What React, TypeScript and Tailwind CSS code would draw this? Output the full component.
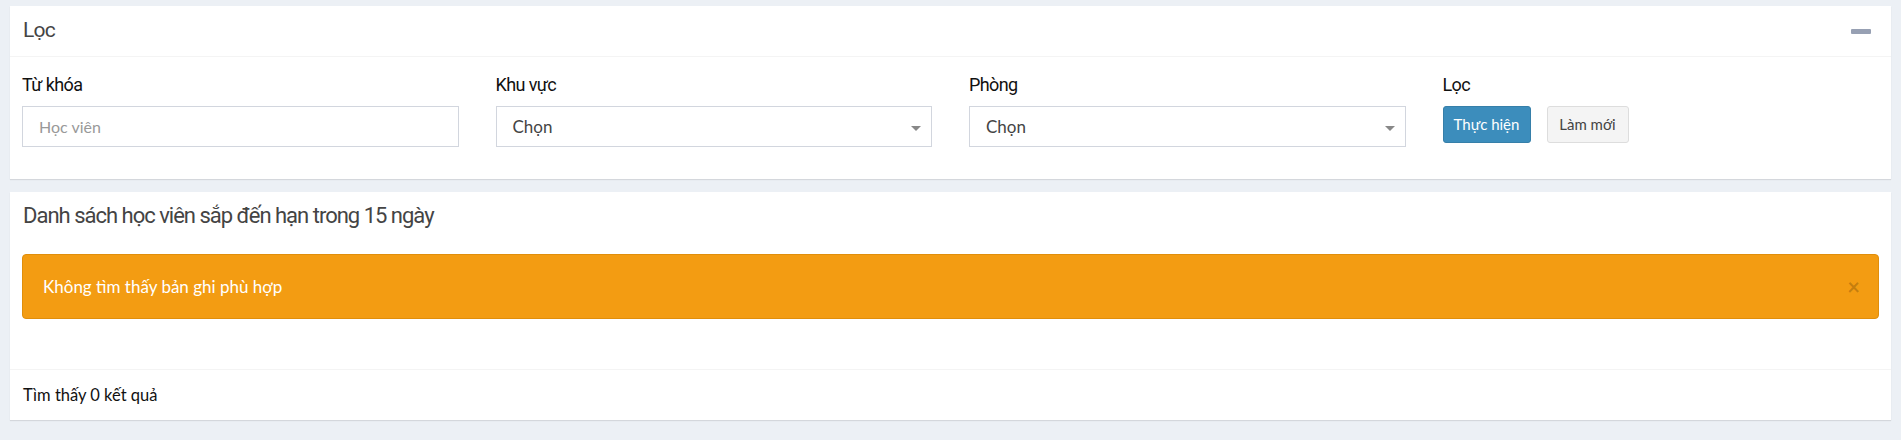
import { useState } from 'react';

const heading = "font-['Roboto',sans-serif]";
const body = "font-['Lato','Open_Sans',sans-serif]";

function SelectBox({ value }: { value: string }) {
  return (
    <div className="relative flex h-[41px] items-center border border-[#d2d6de] bg-white pl-[16px] pr-[30px]">
      <span className={`${body} text-[17px] text-[#444]`}>{value}</span>
      <span className="absolute right-[10px] top-[19px] h-0 w-0 border-x-[5px] border-t-[5px] border-x-transparent border-t-[#888]" />
    </div>
  );
}

function Field({ label, children }: { label: string; children: React.ReactNode }) {
  return (
    <div className="flex flex-col">
      <label className={`${heading} mb-[9px] text-[18px] leading-[24px] tracking-[-0.6px] text-[#111]`}>{label}</label>
      {children}
    </div>
  );
}

export default function App() {
  const [open, setOpen] = useState(true);
  const [keyword, setKeyword] = useState('');

  return (
    <div className="min-h-[440px] bg-[#ecf0f5] px-[10px] pt-[6px]">
      {/* Bộ lọc */}
      <div className="bg-white shadow-[0_1px_1px_rgba(0,0,0,0.1)]">
        <div className="flex h-[51px] items-center justify-between border-b border-[#f4f4f4] pl-[13px] pr-[20px]">
          <h3 className={`${heading} text-[21px] tracking-[-0.8px] text-[#444]`}>Lọc</h3>
          <button onClick={() => setOpen(!open)} className="flex h-[20px] w-[20px] items-center justify-center">
            <span className="block h-[5px] w-[20px] rounded-[1px] bg-[#97a0b3]" />
          </button>
        </div>
        {open && (
          <div className="grid grid-cols-4 gap-x-[37px] px-[12px] pt-[16px] pb-[32px]">
            <Field label="Từ khóa">
              <input
                value={keyword}
                onChange={(e) => setKeyword(e.target.value)}
                placeholder="Học viên"
                className={`${body} h-[41px] border border-[#d2d6de] px-[16px] text-[16px] text-[#444] outline-none placeholder:text-[#999]`}
              />
            </Field>
            <Field label="Khu vực">
              <SelectBox value="Chọn" />
            </Field>
            <Field label="Phòng">
              <SelectBox value="Chọn" />
            </Field>
            <Field label="Lọc">
              <div className="flex gap-[16px]">
                <button className={`${body} h-[37px] w-[88px] rounded-[3px] border border-[#367fa9] bg-[#3c8dbc] text-[15px] text-white`}>
                  Thực hiện
                </button>
                <button className={`${body} h-[37px] w-[82px] rounded-[3px] border border-[#ddd] bg-[#f4f4f4] text-[15px] text-[#444]`}>
                  Làm mới
                </button>
              </div>
            </Field>
          </div>
        )}
      </div>

      {/* Danh sách */}
      <div className="mt-[13px] bg-white shadow-[0_1px_1px_rgba(0,0,0,0.1)]">
        <div className="px-[13px] pt-[9px]">
          <h3 className={`${heading} text-[22px] leading-[30px] tracking-[-1px] text-[#444]`}>Danh sách học viên sắp đến hạn trong 15 ngày</h3>
        </div>
        <div className="px-[12px] pt-[23px] pb-[50px]">
          <div className="flex h-[65px] items-center justify-between rounded-[4px] border border-[#e08e0b] bg-[#f39c12] pl-[20px] pr-[18px]">
            <span className={`${body} text-[17px] text-white`}>Không tìm thấy bản ghi phù hợp</span>
            <button className={`${body} text-[22px] font-bold leading-none text-black/20`}>×</button>
          </div>
        </div>
        <div className="flex h-[51px] items-center border-t border-[#f4f4f4] px-[13px]">
          <span className={`${body} text-[16.5px] text-[#111]`}>Tìm thấy 0 kết quả</span>
        </div>
      </div>
    </div>
  );
}
